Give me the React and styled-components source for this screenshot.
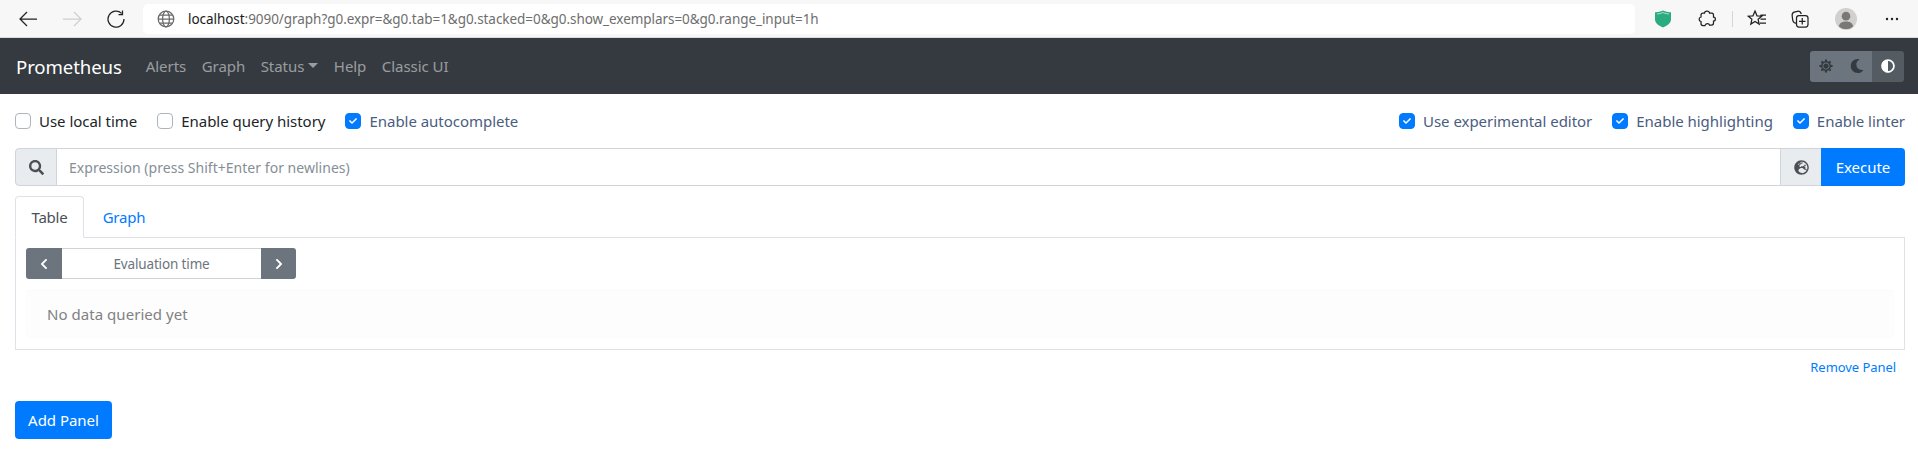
import React from 'react';
import styled, { createGlobalStyle } from 'styled-components';
import { FaSearch, FaGlobeEurope, FaSun, FaMoon, FaAdjust, FaChevronLeft, FaChevronRight, FaCheck } from 'react-icons/fa';

const Global = createGlobalStyle`
  html, body { margin: 0; padding: 0; background: #fff; }
  body { font-family: "Noto Sans", "Open Sans", sans-serif; font-size: 16px; color: #212529; overflow: hidden; }
  * { box-sizing: border-box; }
`;

const Chrome = styled.div`
  height: 38px; background: #f7f7f7; border-bottom: 1px solid #dcdcdc;
  display: flex; align-items: center; padding: 0 0 0 18px;
`;
const NavIcon = styled.svg`
  width: 20px; height: 20px; flex: none; margin-right: ${p => p.$mr || 0}px; margin-left: ${p => p.$ml || 0}px; fill: none;
  stroke: ${p => p.$stroke || '#222'}; stroke-width: 1.25;
`;
const AddressBar = styled.div`
  width: 1492px; height: 30px; margin-left: 17px; background: #fff; border-radius: 5px;
  display: flex; align-items: center; padding-left: 13px; flex: none;
`;
const Url = styled.span`
  margin-left: 12px; font-size: 13.5px; letter-spacing: -0.05px; color: #6e6e6e; white-space: nowrap;
  b { font-weight: 400; color: #1a1a1a; }
`;
const ChromeTools = styled.div`display: flex; align-items: center; flex: 1; padding-left: 19px;`;
const ToolDivider = styled.span`width: 1px; height: 16px; background: #d5d5d5; margin: 0 14px 0 15px;`;
const Avatar = styled.svg`width: 22px; height: 22px; flex: none; margin: 0 28px 0 25px;`;

const Navbar = styled.nav`
  height: 56px; background: #343a40; display: flex; align-items: center; padding: 0 16px;
`;
const Brand = styled.a`font-size: 18.6px; letter-spacing: -0.1px; color: #fff; margin-right: 24px;`;
const NavLink = styled.a`
  font-size: 15px; letter-spacing: -0.05px; color: rgba(255,255,255,.5); margin-right: 15.5px;
  display: inline-flex; align-items: center;
`;
const Caret = styled.span`
  width: 0; height: 0; margin-left: 4px; border-top: 5px solid rgba(255,255,255,.5);
  border-left: 5px solid transparent; border-right: 5px solid transparent; margin-top: -2px;
`;
const ThemeGroup = styled.div`
  margin-left: auto; margin-right: -2px; display: flex; height: 31px; border-radius: 3px; overflow: hidden;
`;
const ThemeBtn = styled.span`
  width: ${p => p.$w}px; display: flex; align-items: center; justify-content: center;
  background: ${p => p.$active ? '#545b62' : '#6c757d'}; color: ${p => p.$active ? '#fff' : '#343a40'};
  font-size: 14px;
`;

const Main = styled.main`padding: 0 13px 0 15px;`;
const OptionsRow = styled.div`
  height: 54px; display: flex; align-items: center; justify-content: space-between;
`;
const OptionGroup = styled.div`display: flex; align-items: center;`;
const Option = styled.label`
  display: flex; align-items: center; font-size: 15px; letter-spacing: -0.03px;
  color: ${p => p.$on ? '#495d80' : '#212529'}; margin-left: ${p => p.$ml || 0}px; white-space: nowrap;
`;
const Box = styled.span`
  width: 16px; height: 16px; border-radius: 4px; margin-right: 8px; flex: none;
  display: flex; align-items: center; justify-content: center; color: #fff; font-size: 8px;
  background: ${p => p.$on ? '#007bff' : '#fff'};
  border: 1px solid ${p => p.$on ? '#007bff' : '#adb5bd'};
`;

const InputGroup = styled.div`display: flex; height: 38px;`;
const Addon = styled.span`
  width: ${p => p.$w}px; flex: none; background: #e9ecef; color: #495057; font-size: 15px;
  display: flex; align-items: center; justify-content: center;
  border: 1px solid #ced4da; border-radius: ${p => p.$left ? '4px 0 0 4px' : '0'};
  border-right: ${p => p.$left ? '1px solid #ced4da' : '0'};
  border-left: ${p => p.$left ? '1px solid #ced4da' : '1px solid #ced4da'};
`;
const Expr = styled.div`
  flex: 1; border-top: 1px solid #ced4da; border-bottom: 1px solid #ced4da;
  display: flex; align-items: center; padding-left: 12px; font-size: 14px; letter-spacing: 0.03px; color: #868e96;
`;
const Execute = styled.button`
  width: 84px; flex: none; background: #007bff; border: 0; color: #fff; font: inherit; font-size: 15px;
  letter-spacing: -0.03px; border-radius: 0 4px 4px 0; padding: 0;
`;
const Tabs = styled.div`
  margin-top: 10px; height: 42px; display: flex; border-bottom: 1px solid #dee2e6;
`;
const Tab = styled.a`
  width: ${p => p.$w}px; height: ${p => p.$active ? 42 : 41}px; display: flex; align-items: center; justify-content: center;
  font-size: 15px; letter-spacing: -0.2px; color: ${p => p.$active ? '#495057' : '#007bff'}; border-radius: 4px 4px 0 0;
  background: #fff; border: 1px solid ${p => p.$active ? '#dee2e6' : 'transparent'};
  border-bottom-color: ${p => p.$active ? '#fff' : 'transparent'};
`;
const TabPane = styled.div`
  height: 112px; padding: 10px; border: 1px solid #dee2e6; border-top: 0;
`;
const TimeControls = styled.div`display: flex; width: 270px; height: 31px;`;
const TimeBtn = styled.span`
  width: ${p => p.$w}px; flex: none; background: #6c757d; color: #fff; font-size: 12px;
  display: flex; align-items: center; justify-content: center;
  border-radius: ${p => p.$left ? '3px 0 0 3px' : '0 3px 3px 0'};
`;
const TimeInput = styled.div`
  flex: 1; border-top: 1px solid #ced4da; border-bottom: 1px solid #ced4da;
  display: flex; align-items: center; justify-content: center; font-size: 13.5px; letter-spacing: -0.14px; color: #6c757d;
`;
const Alert = styled.div`
  margin-top: 10px; height: 49px; padding: 0 20px; background: #fdfdfe; display: flex; align-items: center;
  border-radius: 4px; border: 1px solid #fcfcfd; font-size: 15px; letter-spacing: 0.04px; color: #818182;
`;
const RemoveRow = styled.div`
  height: 30px; margin-top: 2px; display: flex; align-items: center; justify-content: flex-end; padding-right: 9px;
`;
const Remove = styled.a`font-size: 13px; letter-spacing: -0.06px; color: #007bff;`;
const AddPanel = styled.button`
  display: block; margin-top: 19px; width: 97px; height: 38px; padding: 0; border: 0; border-radius: 4px;
  background: #007bff; color: #fff; font: inherit; font-size: 15px; letter-spacing: -0.03px;
`;

const options = [
  ['Use local time', false, 0], ['Enable query history', false, 20], ['Enable autocomplete', true, 20],
];
const rightOptions = [
  ['Use experimental editor', true, 0], ['Enable highlighting', true, 20], ['Enable linter', true, 20],
];
const Opt = ({ label, on, ml }) => (
  <Option $on={on} $ml={ml}><Box $on={on}>{on && <FaCheck />}</Box>{label}</Option>
);

export default function App() {
  return (
    <>
      <Global />
      <Chrome>
        <NavIcon viewBox="0 0 20 20" $mr={24}><path d="M19 10H2M9 3l-7 7 7 7" /></NavIcon>
        <NavIcon viewBox="0 0 20 20" $stroke="#cfcfcf" $mr={24}><path d="M1 10h18M12 3l7 7-7 7" /></NavIcon>
        <NavIcon viewBox="0 0 20 20"><path d="M15.600 4.400A8 8 0 1 0 18 10M16.500 1.500v4h-4" /></NavIcon>
        <AddressBar>
          <NavIcon viewBox="0 0 20 20" $stroke="#6a6a6a"><circle cx="10" cy="10" r="7.800" /><ellipse cx="10" cy="10" rx="3.400" ry="7.800" /><path d="M2.200 10h15.600M3.500 6h13M3.500 14h13" /></NavIcon>
          <Url><b>localhost</b>:9090/graph?g0.expr=&amp;g0.tab=1&amp;g0.stacked=0&amp;g0.show_exemplars=0&amp;g0.range_input=1h</Url>
        </AddressBar>
        <ChromeTools>
          <svg width="18" height="18" viewBox="0 0 18 18"><path d="M1 2.200Q5 2.500 9 .5q4 2 8 1.700v7.300c0 3.500-4 6.500-8 8-4-1.500-8-4.500-8-8z" fill="#2bab80" /><path d="M3 4q3 0 6-1.500 3 1.500 6 1.500" fill="none" stroke="#a8e0cc" strokeWidth="1" /></svg>
          <NavIcon viewBox="0 0 20 20" $ml={25}><path d="M7.500 4C7.500 1.800 11.500 1.200 12.500 3.500v.7H15c1.500 0 1.500 1.300 1.500 2.300V8C19 8 19 12 16.500 12v2c0 1.500-1 2-2 2h-2c-.5-2-4-2-4.500.5H6c-1.500 0-2-1-2-2v-2c-2.500-.5-2.500-4 0-4.500V6c0-1.200 1-2 2-2z" /></NavIcon>
          <ToolDivider />
          <NavIcon viewBox="0 0 20 20"><path d="M8 2l2 4.800 4.700.4-3.600 3.100 1.100 4.800L8 12.500l-4.200 2.600 1.100-4.800L1.300 7.200 6 6.800zM13.500 6H19M13.500 10H19M13 14h6" /></NavIcon>
          <NavIcon viewBox="0 0 20 20" $ml={23}><path d="M6.500 14.500C4 14 3 13 2.700 11L2.200 7c-.3-2 .8-3.800 2.800-4.200l2.500-.5c1.500-.3 3 .5 3.800 2.700" /><rect x="6.500" y="6.500" width="11.500" height="11.500" rx="2.500" /><path d="M12.250 9v6.500M9 12.250h6.500" /></NavIcon>
          <Avatar viewBox="0 0 23 23"><circle cx="11.500" cy="11.500" r="11.500" fill="#d2d0ce" /><circle cx="11.500" cy="8.500" r="4.500" fill="#7a7775" /><path d="M4 19c1-4 4-5 7.500-5s6.500 1 7.500 5c-2 2-4.500 3-7.500 3S6 21 4 19z" fill="#7a7775" /></Avatar>
          <svg width="14" height="4" viewBox="0 0 14 4"><circle cx="2" cy="2" r="1.200" fill="#222" /><circle cx="7" cy="2" r="1.200" fill="#222" /><circle cx="12" cy="2" r="1.200" fill="#222" /></svg>
        </ChromeTools>
      </Chrome>
      <Navbar>
        <Brand>Prometheus</Brand>
        <NavLink>Alerts</NavLink>
        <NavLink>Graph</NavLink>
        <NavLink>Status<Caret /></NavLink>
        <NavLink>Help</NavLink>
        <NavLink>Classic UI</NavLink>
        <ThemeGroup>
          <ThemeBtn $w={31}><FaSun /></ThemeBtn>
          <ThemeBtn $w={31}><FaMoon /></ThemeBtn>
          <ThemeBtn $w={32} $active><FaAdjust /></ThemeBtn>
        </ThemeGroup>
      </Navbar>
      <Main>
        <OptionsRow>
          <OptionGroup>{options.map(([l, o, m]) => <Opt key={l} label={l} on={o} ml={m} />)}</OptionGroup>
          <OptionGroup>{rightOptions.map(([l, o, m]) => <Opt key={l} label={l} on={o} ml={m} />)}</OptionGroup>
        </OptionsRow>
        <InputGroup>
          <Addon $w={42} $left><FaSearch /></Addon>
          <Expr>Expression (press Shift+Enter for newlines)</Expr>
          <Addon $w={41}><FaGlobeEurope /></Addon>
          <Execute>Execute</Execute>
        </InputGroup>
        <Tabs>
          <Tab $w={69} $active>Table</Tab>
          <Tab $w={80}>Graph</Tab>
        </Tabs>
        <TabPane>
          <TimeControls>
            <TimeBtn $w={36} $left><FaChevronLeft /></TimeBtn>
            <TimeInput>Evaluation time</TimeInput>
            <TimeBtn $w={35}><FaChevronRight /></TimeBtn>
          </TimeControls>
          <Alert>No data queried yet</Alert>
        </TabPane>
        <RemoveRow><Remove>Remove Panel</Remove></RemoveRow>
        <AddPanel>Add Panel</AddPanel>
      </Main>
    </>
  );
}
